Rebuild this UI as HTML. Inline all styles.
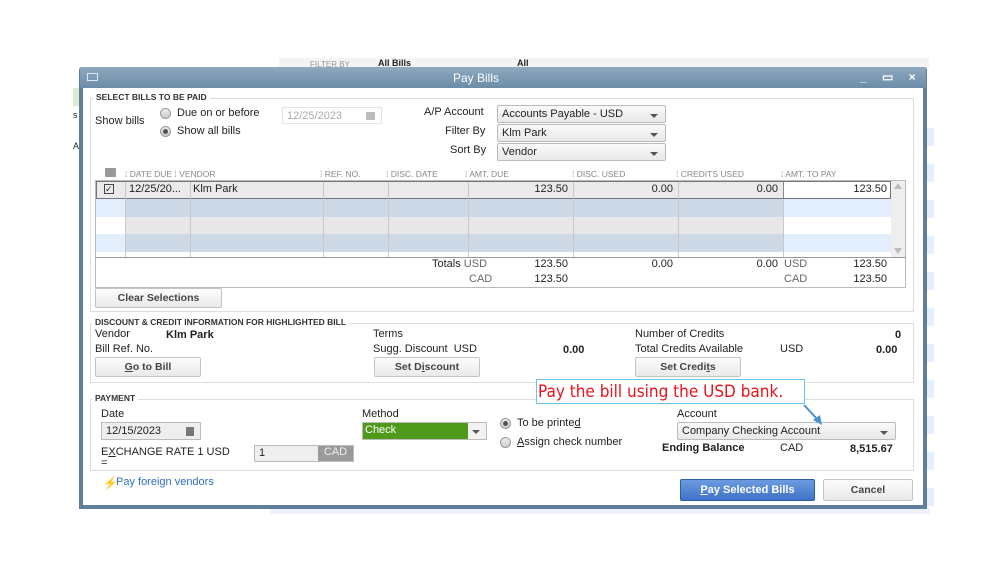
<!DOCTYPE html>
<html><head><style>
*{margin:0;padding:0;box-sizing:border-box}
body{width:999px;height:562px;background:#fff;position:relative;overflow:hidden;font-family:"Liberation Sans",Arial,sans-serif;font-size:11px;color:#222}
.a{position:absolute;white-space:nowrap}
.b{font-weight:bold}
.sec{position:absolute;border:1px solid #ddd;background:#fff}
.lg{position:absolute;font-size:8.5px;font-weight:bold;color:#333;background:#fff;padding:0 3px}
.dd{position:absolute;border:1px solid #bbb;border-radius:2px;background:linear-gradient(#fafafa,#e8e8e8);padding:2px 4px;font-size:11px}
.dd:after{content:"";position:absolute;right:7px;top:8px;border-left:4px solid transparent;border-right:4px solid transparent;border-top:4px solid #555}
.btn{position:absolute;border:1px solid #c4c4c4;border-radius:2px;background:linear-gradient(#fdfdfd,#e9e9e9);font-weight:bold;font-size:10.5px;color:#444;text-align:center;line-height:18px}
.hd{position:absolute;top:169px;font-size:8.5px;color:#888}
.vl{position:absolute;top:182px;height:76px;width:1px;background:#c8c8c8}
.rad{position:absolute;width:11px;height:11px;border-radius:50%;border:1px solid #999;background:linear-gradient(#eee,#ccc)}
.num{position:absolute;text-align:right}
</style></head><body>
<!-- background app -->
<div class="a" style="left:279px;top:58px;width:650px;height:10px;background:#f4f4f4"></div>
<div class="a" style="left:310px;top:60px;font-size:8px;color:#999">FILTER BY</div>
<div class="a" style="left:378px;top:58px;font-size:9px;font-weight:bold">All Bills</div>
<div class="a" style="left:517px;top:58px;font-size:9px;font-weight:bold">All</div>
<div class="a" style="left:73px;top:88px;width:6px;height:18px;background:#d9ecd3"></div>
<div class="a" style="left:73px;top:110px;font-size:9px">s</div>
<div class="a" style="left:73px;top:141px;font-size:9px">A</div>
<div class="a" style="left:926px;top:110px;width:8px;height:400px;background:repeating-linear-gradient(#fff 0 18px,#e4efff 18px 36px)"></div>
<div class="a" style="left:270px;top:508px;width:660px;height:6px;background:#eef3fb"></div>
<!-- dialog -->
<div class="a" style="left:79px;top:67px;width:848px;height:442px;background:#5f7f9b;border-radius:3px 3px 0 0"></div>
<div class="a" style="left:80px;top:67px;width:846px;height:21px;background:linear-gradient(#8ea9c0,#6c8ca8);border-radius:3px 3px 0 0"></div>
<div class="a" style="left:87px;top:73px;width:11px;height:8px;border:1px solid #dfe8f0"></div>
<div class="a" style="left:453px;top:71px;font-size:12px;color:#fff">Pay Bills</div>
<div class="a" style="left:860px;top:70px;color:#fff;font-size:12px;font-weight:bold;letter-spacing:6px">_ ▭ ×</div>
<div class="a" style="left:83px;top:88px;width:840px;height:417px;background:#fff"></div>

<!-- section 1 -->
<div class="sec" style="left:90px;top:98px;width:824px;height:214px"></div>
<div class="lg" style="left:93px;top:92px">SELECT BILLS TO BE PAID</div>
<div class="a" style="left:95px;top:115px">Show bills</div>
<div class="rad" style="left:160px;top:108px"></div>
<div class="a" style="left:177px;top:107px">Due on or before</div>
<div class="rad" style="left:160px;top:126px"><div style="width:5px;height:5px;border-radius:50%;background:#555;margin:2px"></div></div>
<div class="a" style="left:177px;top:125px">Show all bills</div>
<div class="a" style="left:282px;top:107px;width:100px;height:17px;border:1px solid #e4e4e4;color:#aaa;padding:2px 4px;font-size:11px">12/25/2023 <span style="position:absolute;right:6px;top:4px;width:9px;height:8px;background:#bbb"></span></div>
<div class="a" style="left:424px;top:106px">A/P Account</div>
<div class="a" style="left:445px;top:125px">Filter By</div>
<div class="a" style="left:450px;top:144px">Sort By</div>
<div class="dd" style="left:497px;top:105px;width:169px;height:18px">Accounts Payable - USD</div>
<div class="dd" style="left:497px;top:124px;width:169px;height:18px">Klm Park</div>
<div class="dd" style="left:497px;top:143px;width:169px;height:18px">Vendor</div>

<div class="a" style="left:105px;top:168px;width:11px;height:9px;background:#999;border-radius:1px"></div>
<div class="hd" style="left:125px">⁞ DATE DUE ⁞ VENDOR</div>
<div class="hd" style="left:320px">⁞ REF. NO.</div>
<div class="hd" style="left:386px">⁞ DISC. DATE</div>
<div class="hd" style="left:465px">⁞ AMT. DUE</div>
<div class="hd" style="left:572px">⁞ DISC. USED</div>
<div class="hd" style="left:676px">⁞ CREDITS USED</div>
<div class="hd" style="left:781px">⁞ AMT. TO PAY</div>

<div class="a" style="left:95px;top:180px;width:811px;height:108px;border:1px solid #bbb"></div>
<div class="a" style="left:96px;top:181px;width:795px;height:18px;background:#eaeaea;border:1px solid #777"></div>
<div class="a" style="left:783px;top:182px;width:107px;height:16px;background:#fff;border-left:1px solid #888"></div>
<div class="a" style="left:96px;top:199px;width:795px;height:18px;background:#cdd9e7"></div>
<div class="a" style="left:96px;top:217px;width:795px;height:17px;background:#e8e8e8"></div>
<div class="a" style="left:96px;top:234px;width:795px;height:18px;background:#cdd9e7"></div>
<div class="a" style="left:96px;top:199px;width:29px;height:18px;background:#e3eefc"></div>
<div class="a" style="left:96px;top:217px;width:29px;height:17px;background:#fff"></div>
<div class="a" style="left:96px;top:234px;width:29px;height:18px;background:#e3eefc"></div>
<div class="a" style="left:783px;top:199px;width:108px;height:18px;background:#e3eefc"></div>
<div class="a" style="left:783px;top:217px;width:108px;height:17px;background:#fff"></div>
<div class="a" style="left:783px;top:234px;width:108px;height:18px;background:#e3eefc"></div>
<div class="a" style="left:96px;top:252px;width:795px;height:5px;background:#fff"></div>
<div class="a" style="left:891px;top:181px;width:14px;height:76px;background:#eee"></div>
<div class="a" style="left:894px;top:183px;border-left:4px solid transparent;border-right:4px solid transparent;border-bottom:6px solid #bbb"></div>
<div class="a" style="left:894px;top:248px;border-left:4px solid transparent;border-right:4px solid transparent;border-top:6px solid #bbb"></div>
<div class="vl" style="left:125px"></div><div class="vl" style="left:190px"></div><div class="vl" style="left:323px"></div><div class="vl" style="left:388px"></div><div class="vl" style="left:468px"></div><div class="vl" style="left:573px"></div><div class="vl" style="left:678px"></div><div class="vl" style="left:783px;top:199px;height:58px"></div>
<div class="a" style="left:95px;top:257px;width:811px;height:1px;background:#999"></div>
<div class="a" style="left:104px;top:184px;width:10px;height:10px;border:1px solid #444;font-size:9px;line-height:8px">✓</div>
<div class="a" style="left:129px;top:183px">12/25/20...</div>
<div class="a" style="left:193px;top:183px">Klm Park</div>
<div class="num" style="left:470px;width:98px;top:183px">123.50</div>
<div class="num" style="left:575px;width:98px;top:183px">0.00</div>
<div class="num" style="left:680px;width:98px;top:183px">0.00</div>
<div class="num" style="left:785px;width:102px;top:183px">123.50</div>
<div class="a b" style="left:432px;top:258px;font-weight:normal">Totals <span style="color:#666">USD</span></div>
<div class="a" style="left:469px;top:273px;color:#666">CAD</div>
<div class="num" style="left:470px;width:98px;top:258px">123.50</div>
<div class="num" style="left:470px;width:98px;top:273px">123.50</div>
<div class="num" style="left:575px;width:98px;top:258px">0.00</div>
<div class="num" style="left:680px;width:98px;top:258px">0.00</div>
<div class="a" style="left:784px;top:258px;color:#666">USD</div>
<div class="a" style="left:784px;top:273px;color:#666">CAD</div>
<div class="num" style="left:785px;width:102px;top:258px">123.50</div>
<div class="num" style="left:785px;width:102px;top:273px">123.50</div>
<div class="btn" style="left:95px;top:288px;width:127px;height:20px">Clear Selections</div>

<!-- section 2 -->
<div class="sec" style="left:90px;top:323px;width:824px;height:60px"></div>
<div class="lg" style="left:92px;top:317px">DISCOUNT &amp; CREDIT INFORMATION FOR HIGHLIGHTED BILL</div>
<div class="a" style="left:95px;top:328px">Vendor</div>
<div class="a b" style="left:166px;top:329px">Klm Park</div>
<div class="a" style="left:95px;top:343px">Bill Ref. No.</div>
<div class="a" style="left:373px;top:328px">Terms</div>
<div class="a" style="left:373px;top:343px">Sugg. Discount&nbsp; USD</div>
<div class="a b" style="left:563px;top:344px">0.00</div>
<div class="a" style="left:635px;top:328px">Number of Credits</div>
<div class="a" style="left:635px;top:343px">Total Credits Available</div>
<div class="a" style="left:780px;top:343px">USD</div>
<div class="a b" style="left:895px;top:329px">0</div>
<div class="a b" style="left:876px;top:344px">0.00</div>
<div class="btn" style="left:95px;top:357px;width:106px;height:20px"><u>G</u>o to Bill</div>
<div class="btn" style="left:374px;top:357px;width:106px;height:20px">Set D<u>i</u>scount</div>
<div class="btn" style="left:635px;top:357px;width:106px;height:20px">Set Credi<u>t</u>s</div>

<!-- section 3 -->
<div class="sec" style="left:90px;top:399px;width:824px;height:72px"></div>
<div class="lg" style="left:92px;top:393px">PAYMENT</div>
<div class="a" style="left:101px;top:408px">Date</div>
<div class="a" style="left:101px;top:422px;width:100px;height:18px;border:1px solid #bbb;background:#eee;padding:2px 4px">12/15/2023<span style="position:absolute;right:6px;top:4px;width:8px;height:9px;background:#777"></span></div>
<div class="a" style="left:101px;top:446px">E<u>X</u>CHANGE RATE 1 USD</div>
<div class="a" style="left:101px;top:457px">=</div>
<div class="a" style="left:254px;top:445px;width:100px;height:17px;border:1px solid #bbb;background:#eee;padding:1px 4px">1<span style="position:absolute;right:0;top:0;width:35px;height:15px;background:#9a9a9a;color:#eee;text-align:center">CAD</span></div>
<div class="a" style="left:362px;top:408px">Method</div>
<div class="a" style="left:362px;top:422px;width:125px;height:18px;border:1px solid #bbb;background:#f2f2f2"><div style="width:105px;height:16px;background:#4f9a1a;color:#fff;padding:1px 2px">Check</div><span style="position:absolute;right:6px;top:7px;border-left:4px solid transparent;border-right:4px solid transparent;border-top:4px solid #555"></span></div>
<div class="rad" style="left:500px;top:418px"><div style="width:5px;height:5px;border-radius:50%;background:#555;margin:2px"></div></div>
<div class="a" style="left:517px;top:417px">To be printe<u>d</u></div>
<div class="rad" style="left:500px;top:437px"></div>
<div class="a" style="left:517px;top:436px"><u>A</u>ssign check number</div>
<div class="a" style="left:677px;top:408px">Account</div>
<div class="dd" style="left:677px;top:422px;width:219px;height:18px">Company Checking Account</div>
<div class="a b" style="left:662px;top:442px">Ending Balance</div>
<div class="a" style="left:780px;top:442px">CAD</div>
<div class="a b" style="left:850px;top:443px">8,515.67</div>

<div class="a" style="left:536px;top:379px;width:269px;height:25px;border:1px solid #6cc3ee;background:#fff;color:#e8141c;font-size:17px;line-height:24px;padding-left:1px;font-family:'DejaVu Sans Condensed','Liberation Sans Narrow',sans-serif">Pay the bill using the USD bank.</div>
<svg class="a" style="left:800px;top:404px" width="30" height="24"><path d="M4 1 L18 16" stroke="#4a8fd0" stroke-width="2"/><path d="M13 16 L22 21 L20 11 Z" fill="#4a8fd0"/></svg>

<div class="a" style="left:103px;top:476px;color:#e8a000;font-size:12px">⚡</div>
<div class="a" style="left:116px;top:476px;color:#2f6fc0">Pay foreign vendors</div>
<div class="a b" style="left:680px;top:479px;width:135px;height:22px;border:1px solid #2d5ea8;border-radius:2px;background:linear-gradient(#6c9be0,#3f72c8);color:#fff;text-align:center;line-height:20px"><u>P</u>ay Selected Bills</div>
<div class="btn" style="left:823px;top:479px;width:90px;height:22px;line-height:20px">Cancel</div>
</body></html>
